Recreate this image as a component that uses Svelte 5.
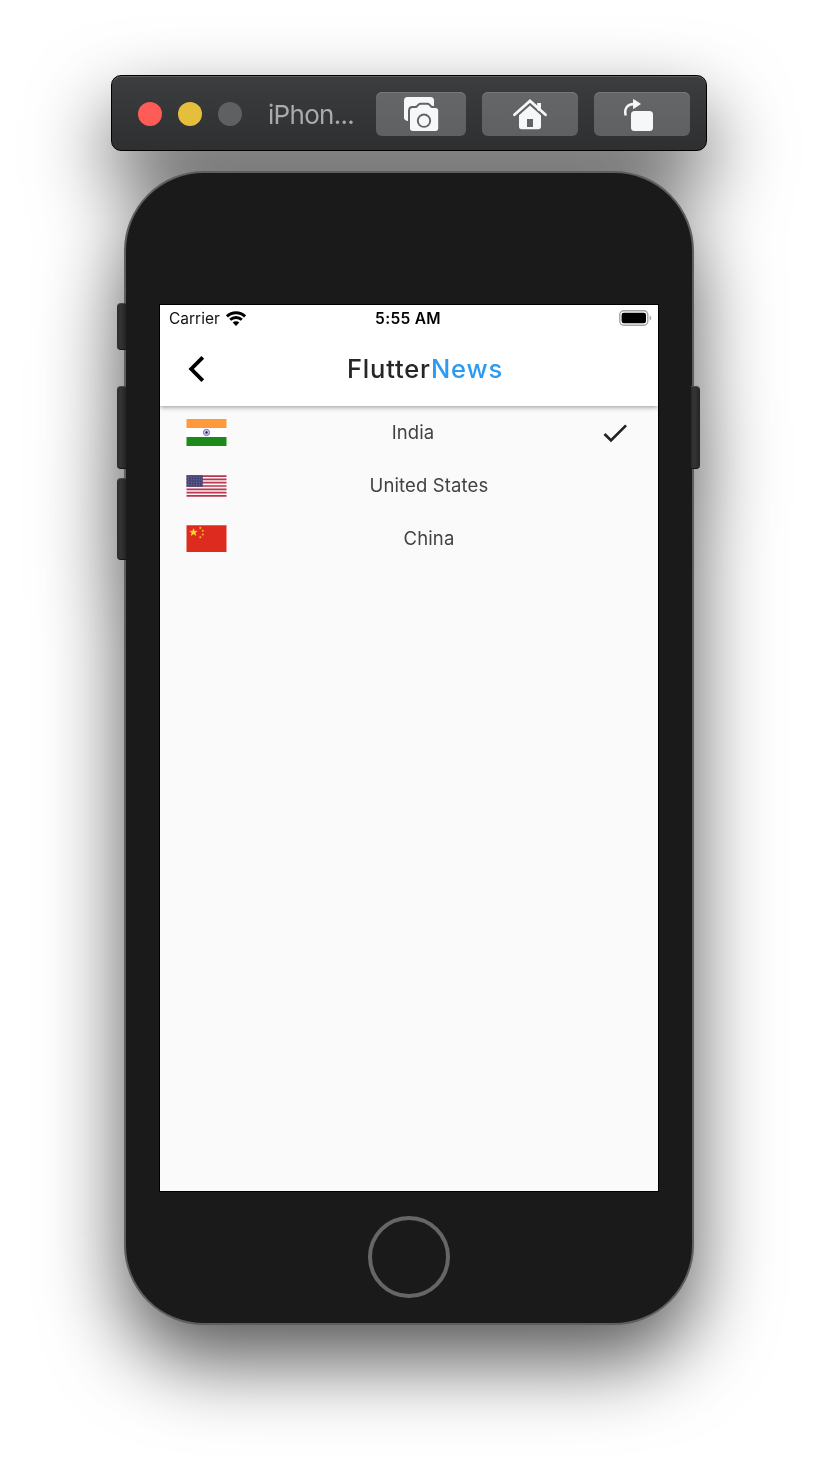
<script>
  const countries = [
    { name: 'India', code: 'in', selected: true },
    { name: 'United States', code: 'us', selected: false },
    { name: 'China', code: 'cn', selected: false }
  ];
  const stripes = [0, 2, 4, 6, 8, 10, 12];
  const smallStars = [[13.8, 2.6], [16.3, 5.4], [16.3, 9.2], [13.8, 12]];
  const keys = [
    { side: 'left', top: 132, height: 47 },
    { side: 'left', top: 215, height: 83 },
    { side: 'left', top: 307, height: 82 },
    { side: 'right', top: 215, height: 83 }
  ];
</script>

<main class="simulator">
  <header class="toolbar">
    <div class="lights">
      <span class="light close"></span>
      <span class="light minimise"></span>
      <span class="light zoom"></span>
    </div>
    <span class="window-title">iPhon...</span>
    <div class="tools">
      <button class="tool camera" aria-label="Screenshot">
        <svg width="90" height="44" viewBox="0 0 90 44">
          <path d="M31.500 5h23a3.500 3.500 0 0 1 3.500 3.500V20H36v9h-4.500A3.500 3.500 0 0 1 28 25.200V8.500A3.500 3.500 0 0 1 31.500 5z" fill="#f6f7f9" />
          <path d="M32 29.500V19q0-5 4.500-5H39c2 0 3-3.200 5.200-3.200h7.600c2.200 0 3.200 3.200 5.200 3.200h3v15z" fill="#626365" />
          <path d="M36.700 16H40c2 0 2.500-3.200 4.700-3.200h6.600c2.200 0 2.700 3.200 4.700 3.200h3.500a2.700 2.700 0 0 1 2.700 2.700v17.600a2.700 2.700 0 0 1-2.700 2.700H36.700a2.700 2.700 0 0 1-2.700-2.700V18.700a2.700 2.700 0 0 1 2.700-2.700z" fill="#f6f7f9" />
          <circle cx="48" cy="28.700" r="6.200" fill="none" stroke="#626365" stroke-width="1.900" />
        </svg>
      </button>
      <button class="tool" aria-label="Home">
        <svg width="96" height="44" viewBox="0 0 96 44">
          <path d="M48 12.600 59 22.500v12a2.700 2.700 0 0 1-2.700 2.700H39.700a2.700 2.700 0 0 1-2.700-2.700v-12z" fill="#f6f7f9" />
          <path d="M55.200 11H59v8h-3.800z" fill="#f6f7f9" />
          <path d="M34.500 24.400 48 12.300l13.500 12.100" fill="none" stroke="#626365" stroke-width="1.600" />
          <path d="M32.400 22.800 48 8.900l15.600 13.900" fill="none" stroke="#f6f7f9" stroke-width="2.700" stroke-linecap="round" />
          <path d="M45 27h6v8h-6z" fill="#626365" />
        </svg>
      </button>
      <button class="tool" aria-label="Rotate">
        <svg width="96" height="44" viewBox="0 0 96 44">
          <rect x="37" y="19" width="22" height="20" rx="3.500" fill="#f6f7f9" />
          <path d="M31.700 23.500c-1.800-7 1.800-11.500 8-11.500" fill="none" stroke="#f6f7f9" stroke-width="2.500" />
          <path d="M39.500 7.500 46.400 12l-6.900 4.500z" fill="#f6f7f9" stroke="#f6f7f9" stroke-width=".9" stroke-linejoin="round" />
        </svg>
      </button>
    </div>
  </header>

  <section class="device">
    {#each keys as key}
      <span class="key {key.side}" style="top: {key.top}px; height: {key.height}px"></span>
    {/each}
    <div class="screen">
      <div class="app-bar">
        <div class="status">
          <div class="carrier">
            <span>Carrier</span>
            <svg width="20" height="15" viewBox="0 0 20 15">
              <g fill="none" stroke="#000" stroke-width="2.900">
                <path d="M1 5.400a12.800 12.800 0 0 1 18 0" />
                <path d="M4.200 8.800a8.300 8.300 0 0 1 11.600 0" />
              </g>
              <path d="M6.700 11.600a4.700 4.700 0 0 1 6.600 0L10 15z" fill="#000" />
            </svg>
          </div>
          <span class="time">5:55 AM</span>
          <svg class="battery" width="33" height="16" viewBox="0 0 33 16">
            <rect x=".8" y=".8" width="28" height="14.400" rx="4" fill="none" stroke="#a4a4a4" stroke-width="1.400" />
            <rect x="2.600" y="2.800" width="24.400" height="10.400" rx="2.200" fill="#000" />
            <path d="M30.700 5.600q1.600.7 1.600 2.400t-1.600 2.400z" fill="#a4a4a4" />
          </svg>
        </div>
        <div class="nav">
          <svg class="back" width="20" height="28" viewBox="0 0 20 28">
            <path d="M16.800 2.300 5.200 14l11.600 11.700" fill="none" stroke="#000" stroke-width="3.800" />
          </svg>
          <h1>Flutter<b>News</b></h1>
        </div>
      </div>

      <ul class="countries">
        {#each countries as country}
          <li>
            {#if country.code === 'in'}
              <svg width="41" height="27" viewBox="-.5 0 41 27">
                <path d="M0 0h40v27H0z" fill="#fff" />
                <path d="M0 0h40v9H0z" fill="#ff9a3c" />
                <path d="M0 18h40v9H0z" fill="#1b8a1b" />
                <circle cx="20" cy="13.500" r="3.100" fill="#c9c9ea" stroke="#7474b8" stroke-width="1" />
                <circle cx="20" cy="13.500" r="1.200" fill="#22227c" />
              </svg>
            {:else if country.code === 'us'}
              <svg width="41" height="22" viewBox="-.5 0 41 21.500">
                <path d="M0 0h40v21.500H0z" fill="#faf4f5" />
                {#each stripes as stripe}
                  <path d="M0 {stripe * 1.654}h40v1.654H0z" fill="#b93750" />
                {/each}
                <path d="M0 0h16.300v11.500H0z" fill="#454578" />
                <path d="M1.500 2h14M1.500 4.500h14M1.500 7h14M1.500 9.500h14" stroke="#8585a9" stroke-width=".8" stroke-dasharray="1 1.700" />
              </svg>
            {:else}
              <svg width="41" height="27" viewBox="-.5 -.3 41 27">
                <path d="M0 0h40v26.700H0z" fill="#dd2c1f" />
                <path d="m7 3.400.9 2.500h2.700L8.500 7.500l.8 2.600L7 8.500l-2.300 1.600.8-2.600-2.100-1.600h2.700z" fill="#ffde2a" stroke="#ffde2a" stroke-width=".5" />
                {#each smallStars as [x, y]}
                  <circle cx={x} cy={y} r="1.050" fill="#f5b924" />
                {/each}
              </svg>
            {/if}
            <span class="name">{country.name}</span>
            {#if country.selected}
              <svg width="32" height="32" viewBox="0 0 24 24">
                <path d="M9 16.170 4.830 12l-1.420 1.410L9 19 21 7l-1.410-1.410z" fill="#222" />
              </svg>
            {:else}
              <i></i>
            {/if}
          </li>
        {/each}
      </ul>
    </div>
    <div class="home-button"></div>
  </section>
</main>

<style>
  :global(body) {
    margin: 0;
    background: #fff;
  }
  .simulator {
    box-sizing: border-box;
    width: 818px;
    height: 1474px;
    padding-top: 75px;
    display: flex;
    flex-direction: column;
    align-items: center;
    gap: 20px;
    overflow: hidden;
    font-family: Inter, 'Liberation Sans', sans-serif;
    filter: drop-shadow(0 36px 40px rgba(0, 0, 0, 0.66));
  }
  .toolbar {
    box-sizing: border-box;
    width: 596px;
    height: 76px;
    flex: none;
    padding: 2px 16px 0 26px;
    display: flex;
    align-items: center;
    border: 1px solid #000;
    border-radius: 10px;
    background: linear-gradient(#3c3d3f, #2e2f31);
    box-shadow: inset 0 1px #5c5d5f;
  }
  .lights {
    display: flex;
    gap: 16px;
  }
  .light {
    width: 24px;
    height: 24px;
    border-radius: 50%;
  }
  .close { background: #ff5c57; }
  .minimise { background: #e5bf3c; }
  .zoom { background: #5f6062; }
  .window-title {
    margin-left: 26px;
    font-size: 26px;
    letter-spacing: -0.7px;
    color: #a9aaac;
    white-space: nowrap;
  }
  .tools {
    margin-left: auto;
    display: flex;
    gap: 16px;
  }
  .tool {
    width: 96px;
    height: 44px;
    padding: 0;
    border: 0;
    border-radius: 6px;
    background: linear-gradient(#656668, #5f6062);
    box-shadow: inset 0 1px #77787a;
  }
  .camera { width: 90px; }
  svg {
    display: block;
    flex: none;
  }
  .device {
    position: relative;
    box-sizing: border-box;
    width: 570px;
    height: 1154px;
    flex: none;
    padding-top: 132px;
    display: flex;
    flex-direction: column;
    align-items: center;
    border: 2px solid #5e5e5e;
    border-radius: 80px;
    background: #1a1a1a;
  }
  .key {
    position: absolute;
    width: 9px;
    margin-top: -2px;
    box-sizing: border-box;
    background: linear-gradient(90deg, #2b2b2b, #353535 35%, #242424);
    border-top: 1px solid #484848;
    border-bottom: 1px solid #161616;
  }
  .left {
    left: -9px;
    border-radius: 4px 0 0 4px;
  }
  .right {
    right: -8px;
    border-radius: 0 4px 4px 0;
  }
  .screen {
    width: 498px;
    height: 886px;
    flex: none;
    background: #fafafa;
    box-shadow: 0 0 0 1px #000;
    overflow: hidden;
  }
  .app-bar {
    position: relative;
    height: 101px;
    background: #fff;
    box-shadow: 0 1px 5px rgba(0, 0, 0, 0.42);
  }
  .status {
    height: 27px;
    padding: 0 7px 0 9px;
    display: grid;
    grid-template-columns: 1fr auto 1fr;
    align-items: center;
    font-size: 15.500px;
    color: #111;
  }
  .carrier {
    display: flex;
    align-items: center;
    gap: 6px;
  }
  .time {
    margin: 0 2px 0 -2px;
    font-weight: 600;
    letter-spacing: 0.3px;
    color: #000;
  }
  .battery {
    justify-self: end;
    margin: 0 -1px 2px 0;
  }
  .nav {
    height: 72px;
    padding: 0 0 2px 26px;
    display: flex;
    align-items: center;
  }
  .back { margin-top: 1px; }
  h1 {
    margin: 0 0 0 141px;
    font-size: 25.500px;
    font-weight: 500;
    letter-spacing: 0.8px;
    color: #262626;
    white-space: nowrap;
  }
  h1 b {
    font-weight: 500;
    color: #2b9af3;
  }
  .countries {
    margin: 0;
    padding: 0;
    list-style: none;
  }
  li {
    height: 53px;
    padding: 0 27px 0 26px;
    display: flex;
    align-items: center;
    justify-content: space-between;
    font-size: 18.500px;
    letter-spacing: 0.13px;
    color: #424242;
  }
  .name { margin-bottom: 2px; }
  .home-button {
    box-sizing: border-box;
    width: 82px;
    height: 82px;
    margin-top: 25px;
    flex: none;
    border: 4px solid #666;
    border-radius: 50%;
  }
</style>
